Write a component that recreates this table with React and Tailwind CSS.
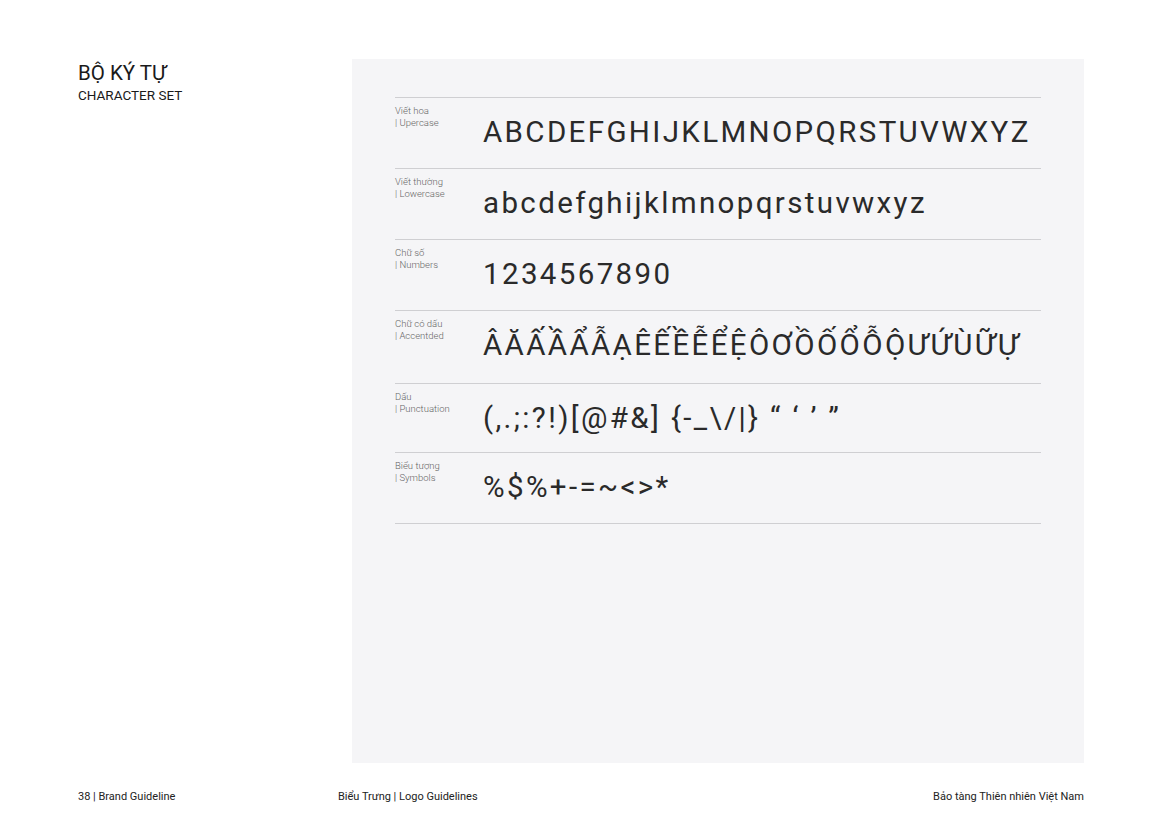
const rows = [
  { vi: 'Viết hoa', en: '| Upercase', sample: 'ABCDEFGHIJKLMNOPQRSTUVWXYZ', h: 'h-[71px]' },
  { vi: 'Viết thường', en: '| Lowercase', sample: 'abcdefghijklmnopqrstuvwxyz', h: 'h-[71px]' },
  { vi: 'Chữ số', en: '| Numbers', sample: '1234567890', h: 'h-[71px]' },
  { vi: 'Chữ có dấu', en: '| Accentded', sample: 'ÂĂẤẦẨẪẠÊẾỀỄỂỆÔƠỒỐỔỖỘƯỨÙỮỰ', h: 'h-[73px]' },
  { vi: 'Dấu', en: '| Punctuation', sample: '(,.;:?!)[@#&] {-_\\/|} “ ‘ ’ ”', h: 'h-[69px]' },
  { vi: 'Biểu tượng', en: '| Symbols', sample: '%$%+-=~<>*', h: 'h-[71px]' },
];

export default function App() {
  return (
    <div className="w-[1163px] h-[823px] bg-white flex flex-col font-['Roboto',sans-serif] text-[#222]">
      <div className="flex flex-1 pt-[59px]">
        {/* Title */}
        <div className="w-[352px] pl-[78px] pt-[2px]">
          <h1 className="text-[20.5px] leading-[24px] text-[#1a1a1a]">BỘ KÝ TỰ</h1>
          <p className="text-[13.5px] leading-[20px] text-[#1a1a1a]">CHARACTER SET</p>
        </div>

        {/* Character panel */}
        <div className="w-[732px] h-[704px] bg-[#f5f5f7] pt-[38px] pl-[43px]">
          <div className="w-[646px] border-t border-[#cfcfd2]">
            {rows.map((r) => (
              <div key={r.en} className={`flex border-b border-[#cfcfd2] ${r.h}`}>
                <div className="w-[88px] pt-[7px] text-[9.5px] leading-[12px] font-light text-[#666]">
                  <div>{r.vi}</div>
                  <div>{r.en}</div>
                </div>
                <div className="pt-[17px] text-[29.5px] leading-[34px] tracking-[0.08em] text-[#2a2a2a] whitespace-nowrap">
                  {r.sample}
                </div>
              </div>
            ))}
          </div>
        </div>
      </div>

      {/* Footer */}
      <div className="flex h-[60px] pl-[78px] pr-[79px] pt-[27px] text-[11px] leading-[13px] text-[#222]">
        <span className="w-[260px]">38 | Brand Guideline</span>
        <span className="flex-1">Biểu Trưng | Logo Guidelines</span>
        <span>Bảo tàng Thiên nhiên Việt Nam</span>
      </div>
    </div>
  );
}
